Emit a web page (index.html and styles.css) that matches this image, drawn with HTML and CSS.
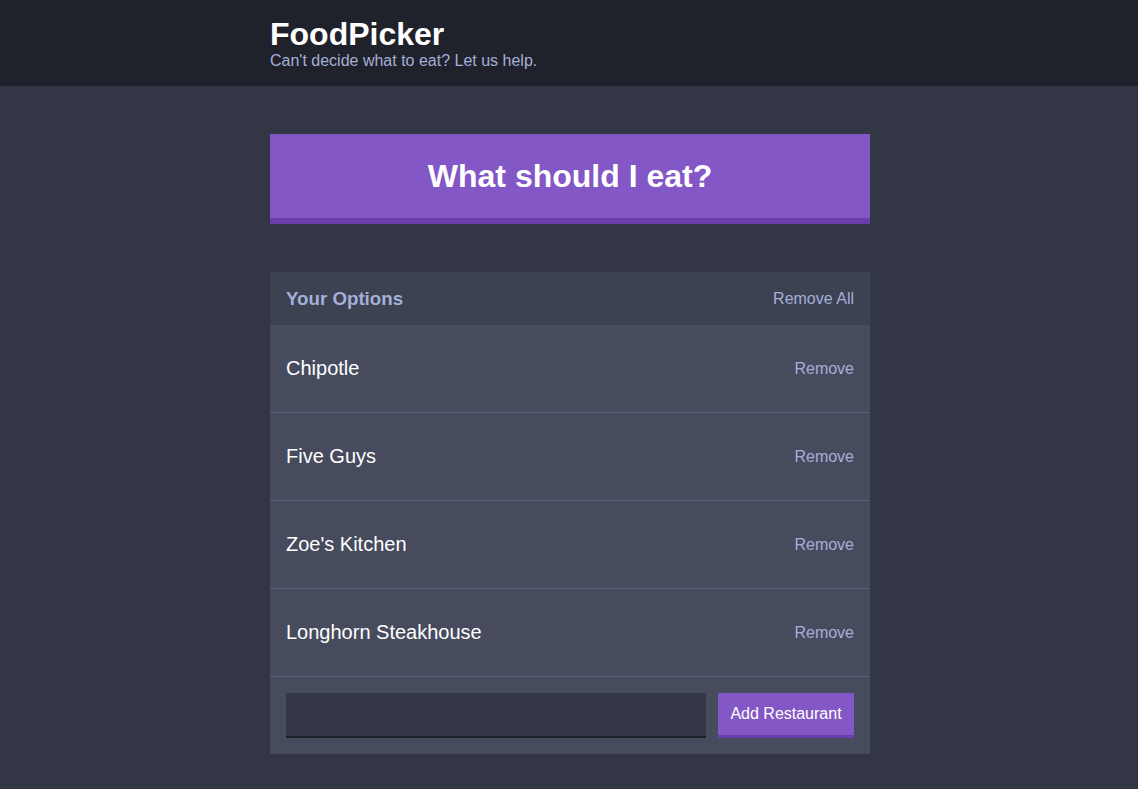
FILE: index.html
```html
<!DOCTYPE html>
<html lang="en">
<head>
<meta charset="utf-8">
<title>FoodPicker</title>
<link rel="stylesheet" href="styles.css">
</head>
<body>
<header class="header">
  <div class="container">
    <h1 class="header__title">FoodPicker</h1>
    <h2 class="header__subtitle">Can't decide what to eat? Let us help.</h2>
  </div>
</header>
<main class="container">
  <button class="big-button">What should I eat?</button>
  <section class="widget">
    <div class="widget-header">
      <h3 class="widget-header__title">Your Options</h3>
      <button class="button--link">Remove All</button>
    </div>
    <div class="option">
      <p class="option__text">Chipotle</p>
      <button class="button--link">Remove</button>
    </div>
    <div class="option">
      <p class="option__text">Five Guys</p>
      <button class="button--link">Remove</button>
    </div>
    <div class="option">
      <p class="option__text">Zoe's Kitchen</p>
      <button class="button--link">Remove</button>
    </div>
    <div class="option">
      <p class="option__text">Longhorn Steakhouse</p>
      <button class="button--link">Remove</button>
    </div>
    <form class="add-option">
      <input class="add-option__input" type="text" name="option">
      <button class="button" type="button">Add Restaurant</button>
    </form>
  </section>
</main>
</body>
</html>
```
FILE: styles.css
```css
* { box-sizing: border-box; }
html, body { margin: 0; padding: 0; }
body {
  background: #333745;
  font-family: "Liberation Sans", Arial, Helvetica, sans-serif;
  font-size: 16px;
  color: #ffffff;
  padding-left: 2px;
}
.container {
  max-width: 600px;
  margin: 0 auto;
}
.header {
  background: #20222b;
  padding: 16px 0 16px 2px;
  margin: 0 0 48px -2px;
  height: 86px;
}
.header__title {
  margin: 0;
  font-size: 32px;
  line-height: 36px;
  font-weight: bold;
  color: #ffffff;
}
.header__subtitle {
  margin: 0;
  font-size: 16px;
  line-height: 18px;
  font-weight: 500;
  color: #a5afd7;
}
.big-button {
  display: block;
  width: 100%;
  background: #8357c5;
  border: none;
  border-bottom: 6px solid #6a3eac;
  color: #ffffff;
  font-family: inherit;
  font-weight: bold;
  font-size: 32px;
  line-height: 36px;
  padding: 24px;
  height: 90px;
  margin: 0 0 48px;
}
.widget {
  background: #464b5e;
  margin-bottom: 48px;
}
.widget-header {
  background: #3c4251;
  display: flex;
  justify-content: space-between;
  align-items: center;
  padding: 16px;
  height: 53px;
}
.widget-header__title {
  margin: 0;
  font-size: 18.72px;
  line-height: 21px;
  color: #a5afd7;
  font-weight: bold;
}
.button--link {
  background: none;
  border: none;
  padding: 0;
  color: #a5afd7;
  font-family: inherit;
  font-size: 16px;
}
.option {
  display: flex;
  justify-content: space-between;
  align-items: center;
  padding: 32px 16px;
  height: 88px;
  border-bottom: 1px solid #5b6079;
}
.option__text {
  margin: 0;
  font-size: 20px;
  line-height: 23px;
  font-weight: 500;
  color: #ffffff;
}
.add-option {
  display: flex;
  padding: 16px;
  margin: 0;
}
.add-option__input {
  flex-grow: 1;
  background: #333745;
  border: none;
  border-bottom: 2px solid #1f212a;
  color: #a5afd7;
  margin-right: 12px;
  padding: 8px;
  height: 45px;
  font-family: inherit;
  font-size: 16px;
}
.button {
  background: #8357c5;
  border: none;
  border-bottom: 3px solid #6a3eac;
  color: #ffffff;
  font-family: inherit;
  font-size: 16px;
  font-weight: 500;
  padding: 12px;
  height: 45px;
  width: 136px;
}
```
